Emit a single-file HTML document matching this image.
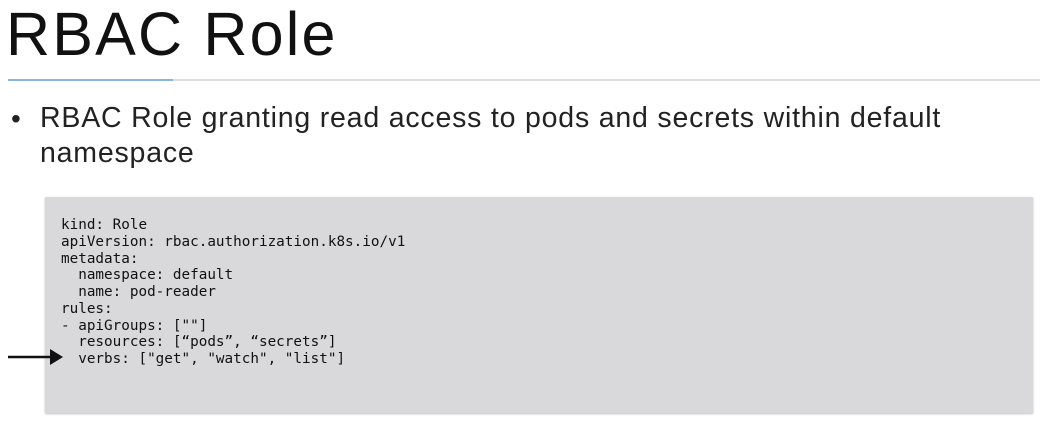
<!DOCTYPE html>
<html><head><meta charset="utf-8"><style>
body{margin:0;width:1046px;height:433px;background:#fff;position:relative;overflow:hidden;font-family:"Liberation Sans",sans-serif;}
.t{position:absolute;left:6px;top:-1px;font-size:61px;color:#111;letter-spacing:2.2px}
.l1{position:absolute;left:8px;top:79px;width:1032px;height:2px;background:#dcdedf}
.l2{position:absolute;left:8px;top:79px;width:165px;height:2px;background:#8ab4e4}
.b{position:absolute;left:40px;top:101px;font-size:28.5px;line-height:35px;color:#222;letter-spacing:0.8px}
.dot{position:absolute;left:11px;top:101px;font-size:28px;line-height:35px;color:#222}
.box{position:absolute;left:45px;top:197px;width:988px;height:216px;background:#d9d9db;box-shadow:0 1px 2px rgba(0,0,0,.25)}
pre{position:absolute;left:61px;top:217px;margin:0;font-family:"DejaVu Sans Mono","Liberation Mono",monospace;font-size:14.3px;line-height:16.75px;color:#111}
</style></head><body>
<div class="t">RBAC Role</div>
<div class="l1"></div><div class="l2"></div>
<div class="dot">•</div>
<div class="b">RBAC Role granting read access to pods and secrets within default<br>namespace</div>
<div class="box"></div>
<pre>kind: Role
apiVersion: rbac.authorization.k8s.io/v1
metadata:
  namespace: default
  name: pod-reader
rules:
- apiGroups: [""]
  resources: [“pods”, “secrets”]
  verbs: ["get", "watch", "list"]</pre>
<svg style="position:absolute;left:0;top:0" width="80" height="433"><line x1="8" y1="357" x2="54" y2="357" stroke="#111" stroke-width="2.5"/><path d="M50 349 L63 357 L50 365 Z" fill="#111"/></svg>
</body></html>
